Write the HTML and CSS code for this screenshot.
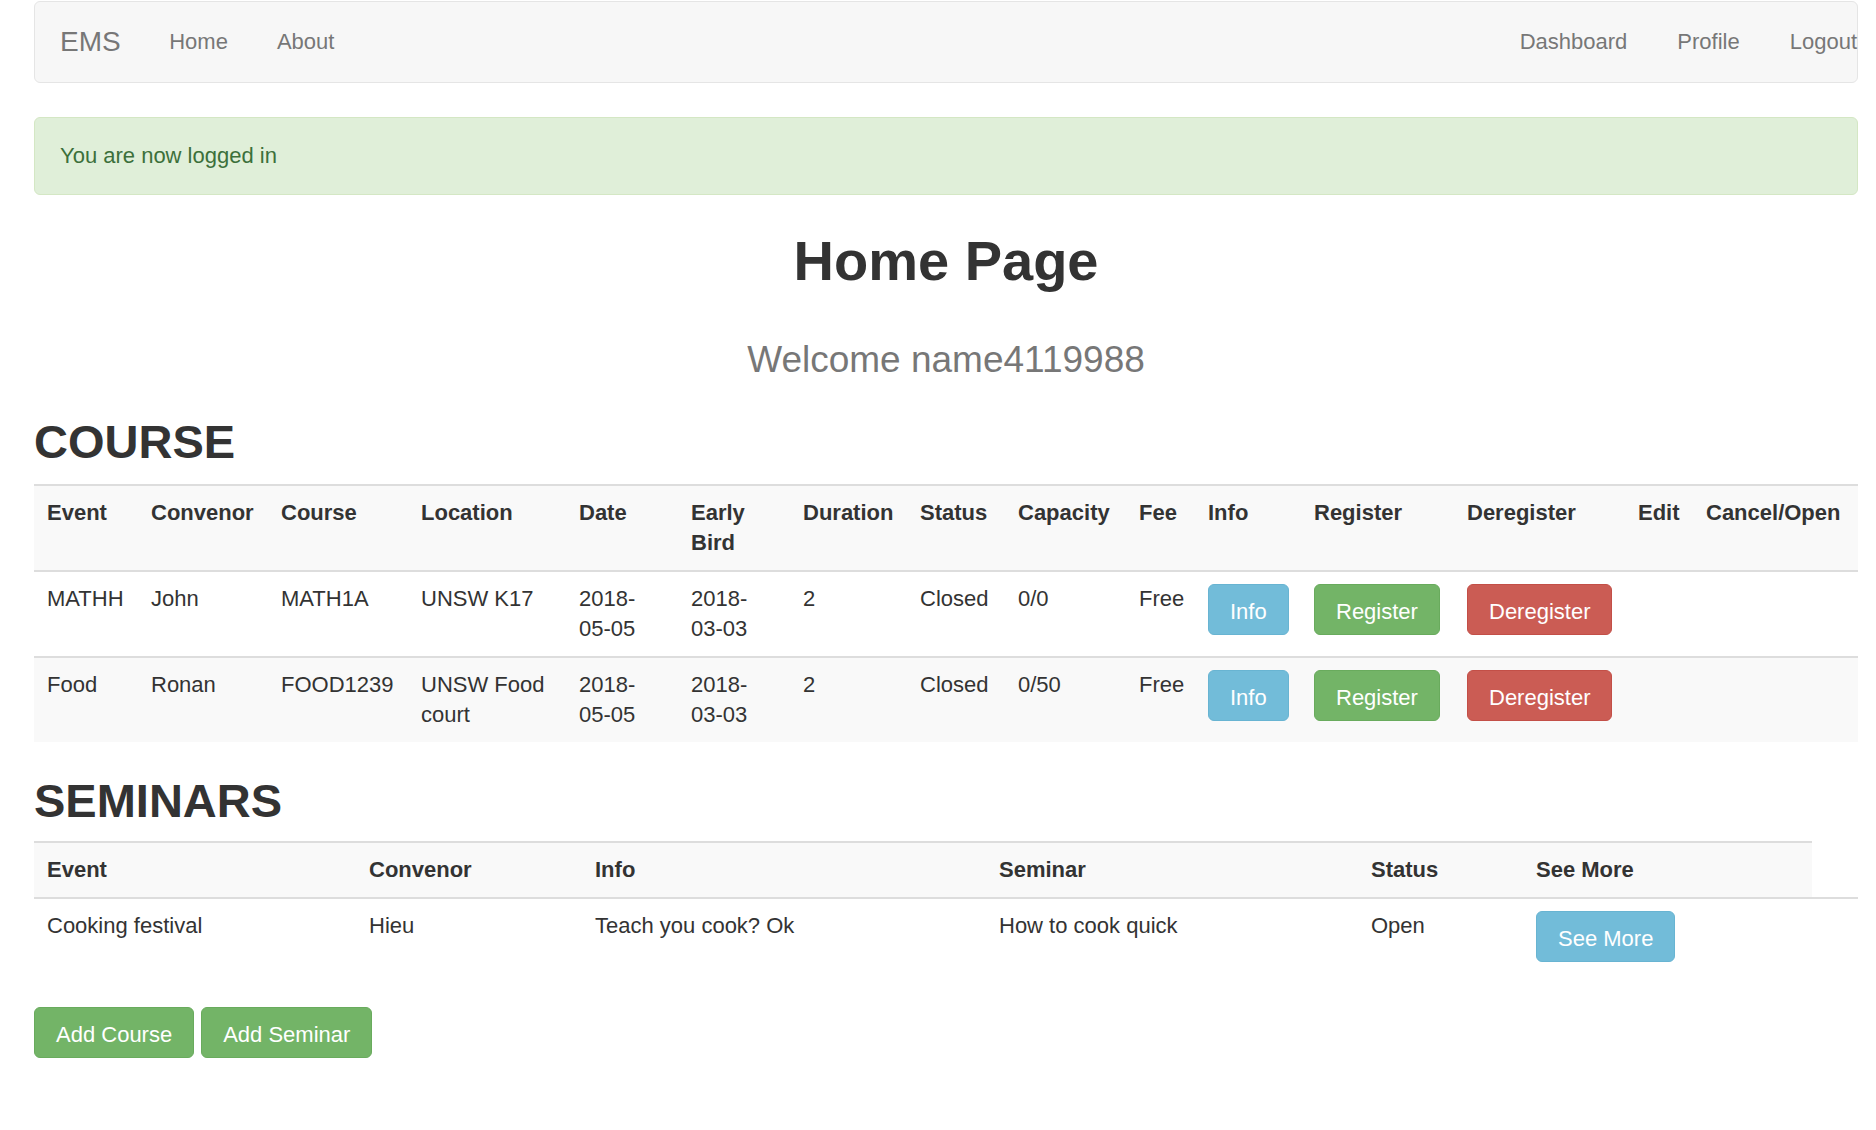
FILE: index.html
```html
<!DOCTYPE html>
<html lang="en">
<head>
<meta charset="utf-8">
<title>EMS - Home Page</title>
<link rel="stylesheet" href="styles.css">
</head>
<body>
<div class="page">
  <nav class="navbar">
    <a class="brand" href="#">EMS</a>
    <ul class="nav">
      <li><a href="#">Home</a></li>
      <li><a href="#">About</a></li>
    </ul>
    <ul class="nav nav-right">
      <li><a href="#">Dashboard</a></li>
      <li><a href="#">Profile</a></li>
      <li><a href="#">Logout</a></li>
    </ul>
  </nav>

  <div class="alert">You are now logged in</div>

  <h1 class="page-title">Home Page</h1>
  <h3 class="welcome">Welcome name4119988</h3>

  <h2 class="section-title section-course">COURSE</h2>
  <table class="table table-striped">
    <colgroup>
      <col class="cc-event"><col class="cc-convenor"><col class="cc-course"><col class="cc-location">
      <col class="cc-date"><col class="cc-early"><col class="cc-duration"><col class="cc-status">
      <col class="cc-capacity"><col class="cc-fee"><col class="cc-info"><col class="cc-register">
      <col class="cc-deregister"><col class="cc-edit"><col class="cc-cancel">
    </colgroup>
    <tbody>
      <tr>
        <th>Event</th><th>Convenor</th><th>Course</th><th>Location</th><th>Date</th>
        <th>Early Bird</th><th>Duration</th><th>Status</th><th>Capacity</th><th>Fee</th>
        <th>Info</th><th>Register</th><th>Deregister</th><th>Edit</th><th>Cancel/Open</th>
      </tr>
      <tr>
        <td>MATHH</td><td>John</td><td>MATH1A</td><td>UNSW K17</td><td>2018-05-05</td>
        <td>2018-03-03</td><td>2</td><td>Closed</td><td>0/0</td><td>Free</td>
        <td><a class="btn btn-info" href="#">Info</a></td>
        <td><a class="btn btn-success" href="#">Register</a></td>
        <td><a class="btn btn-danger" href="#">Deregister</a></td>
        <td></td><td></td>
      </tr>
      <tr>
        <td>Food</td><td>Ronan</td><td>FOOD1239</td><td>UNSW Food court</td><td>2018-05-05</td>
        <td>2018-03-03</td><td>2</td><td>Closed</td><td>0/50</td><td>Free</td>
        <td><a class="btn btn-info" href="#">Info</a></td>
        <td><a class="btn btn-success" href="#">Register</a></td>
        <td><a class="btn btn-danger" href="#">Deregister</a></td>
        <td></td><td></td>
      </tr>
    </tbody>
  </table>

  <h2 class="section-title section-seminars">SEMINARS</h2>
  <table class="table table-striped table-seminars">
    <colgroup>
      <col class="cs-event"><col class="cs-convenor"><col class="cs-info"><col class="cs-seminar">
      <col class="cs-status"><col class="cs-more"><col class="cs-extra">
    </colgroup>
    <tbody>
      <tr>
        <th>Event</th><th>Convenor</th><th>Info</th><th>Seminar</th><th>Status</th><th>See More</th>
      </tr>
      <tr>
        <td>Cooking festival</td><td>Hieu</td><td>Teach you cook? Ok</td><td>How to cook quick</td>
        <td>Open</td><td><a class="btn btn-info" href="#">See More</a></td><td></td>
      </tr>
    </tbody>
  </table>

  <div class="actions">
    <a class="btn btn-success" href="#">Add Course</a>
    <a class="btn btn-success" href="#">Add Seminar</a>
  </div>
</div>
</body>
</html>
```

FILE: styles.css
```css
html, body {
  background: #ffffff;
}

body {
  margin: 0;
  font-family: "Liberation Sans", Arial, Helvetica, sans-serif;
  font-size: 22px;
  line-height: 30px;
  color: #333333;
}

.page {
  padding: 1px 18px 0 34px;
}

/* ---------- Navbar ---------- */
.navbar {
  display: flex;
  align-items: center;
  box-sizing: border-box;
  height: 82px;
  background: #f7f7f7;
  border: 1px solid #e5e5e5;
  border-radius: 6px;
  margin-bottom: 34px;
}

.brand {
  font-size: 28px;
  line-height: 30px;
  color: #777777;
  text-decoration: none;
  padding: 0 24px 0 25px;
}

.nav {
  display: flex;
  list-style: none;
  margin: 0;
  padding: 0;
}

.nav a {
  display: block;
  padding: 0 24.5px;
  color: #777777;
  text-decoration: none;
  white-space: nowrap;
}

.nav-right {
  margin-left: auto;
}

.nav-right a {
  padding: 0 25px;
}

.nav-right li:last-child a {
  padding-right: 0;
}

/* ---------- Alert ---------- */
.alert {
  background: #e0efd9;
  border: 1px solid #d4e7c4;
  border-radius: 6px;
  color: #3c703b;
  padding: 23px 25px;
}

/* ---------- Headings ---------- */
.page-title {
  font-size: 56px;
  line-height: 1.1;
  font-weight: bold;
  text-align: center;
  margin: 35px 0 0;
  color: #333333;
}

.welcome {
  font-size: 37px;
  line-height: 1.1;
  font-weight: normal;
  text-align: center;
  color: #777777;
  margin: 48px 0 0;
}

.section-title {
  font-size: 47px;
  line-height: 1.1;
  font-weight: bold;
  color: #333333;
}

.section-course {
  margin: 36px 0 16px;
}

.section-seminars {
  margin: 33px 0 14px;
}

/* ---------- Tables ---------- */
.table {
  width: 100%;
  table-layout: fixed;
  border-collapse: separate;
  border-spacing: 0;
  margin: 0;
}

.table th,
.table td {
  box-sizing: border-box;
  padding: 12px 11px 12px 13px;
  line-height: 30px;
  vertical-align: top;
  text-align: left;
  border-top: 2px solid #dddddd;
}

.table th {
  font-weight: bold;
}

.table-striped tr:nth-child(odd) {
  background: #f9f9f9;
}

.table-seminars {
  margin-bottom: 33px;
}

/* course columns */
.cc-event { width: 104px; }
.cc-convenor { width: 130px; }
.cc-course { width: 140px; }
.cc-location { width: 158px; }
.cc-date { width: 112px; }
.cc-early { width: 112px; }
.cc-duration { width: 117px; }
.cc-status { width: 98px; }
.cc-capacity { width: 121px; }
.cc-fee { width: 69px; }
.cc-info { width: 106px; }
.cc-register { width: 153px; }
.cc-deregister { width: 171px; }
.cc-edit { width: 68px; }
.cc-cancel { width: 165px; }

/* seminar columns */
.cs-event { width: 322px; }
.cs-convenor { width: 226px; }
.cs-info { width: 404px; }
.cs-seminar { width: 372px; }
.cs-status { width: 165px; }
.cs-more { width: 289px; }
.cs-extra { width: 46px; }

/* ---------- Buttons ---------- */
.btn {
  display: inline-block;
  font-size: 22px;
  line-height: 29px;
  padding: 12px 21px 8px;
  border: 1px solid transparent;
  border-radius: 6px;
  color: #ffffff;
  text-decoration: none;
  white-space: nowrap;
  vertical-align: top;
}

.btn-info {
  background: #72bcd9;
  border-color: #68b4d2;
}

.btn-success {
  background: #73b467;
  border-color: #69ab5d;
}

.btn-danger {
  background: #cb5c54;
  border-color: #c34f47;
}

.actions {
  display: flex;
  gap: 7px;
}
```
